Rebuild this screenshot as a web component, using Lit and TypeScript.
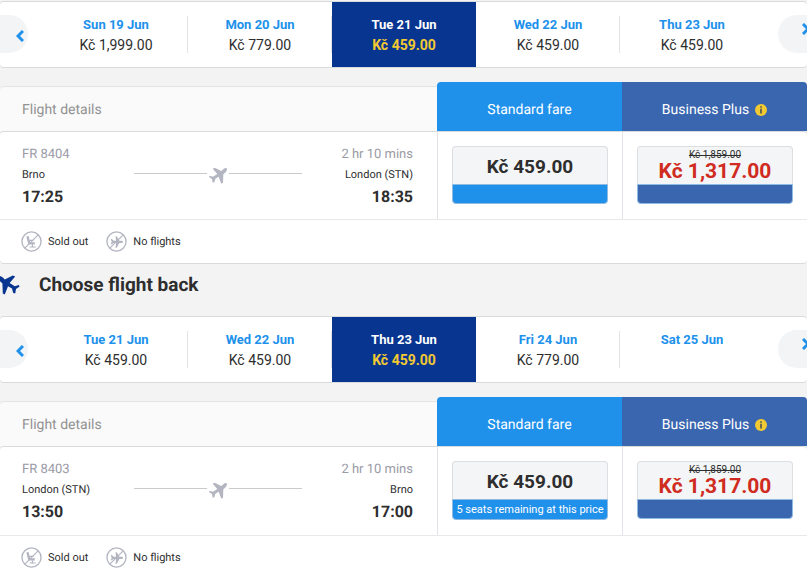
import { LitElement, html, css, svg, nothing } from "lit";
import { customElement, property } from "lit/decorators.js";

interface Day {
  label: string;
  price?: string;
}

interface Flight {
  number: string;
  duration: string;
  from: string;
  to: string;
  departs: string;
  arrives: string;
  standard: string;
  note?: string;
  oldBusiness: string;
  business: string;
}

const PLANE = svg`<path d="M66 17C62 14 55 20 50 25L30 15L24 18L38 34L25 42L15 39L13 43L22 49L24 60L29 59L32 48L42 42L50 63L55 60L56 35C62 30 69 24 66 17Z"/>`;

const OUTBOUND: Day[] = [
  { label: "Sun 19 Jun", price: "Kč 1,999.00" },
  { label: "Mon 20 Jun", price: "Kč 779.00" },
  { label: "Tue 21 Jun", price: "Kč 459.00" },
  { label: "Wed 22 Jun", price: "Kč 459.00" },
  { label: "Thu 23 Jun", price: "Kč 459.00" },
];

const RETURN: Day[] = [
  { label: "Tue 21 Jun", price: "Kč 459.00" },
  { label: "Wed 22 Jun", price: "Kč 459.00" },
  { label: "Thu 23 Jun", price: "Kč 459.00" },
  { label: "Fri 24 Jun", price: "Kč 779.00" },
  { label: "Sat 25 Jun" },
];

const FLIGHT_OUT: Flight = {
  number: "FR 8404",
  duration: "2 hr 10 mins",
  from: "Brno",
  to: "London (STN)",
  departs: "17:25",
  arrives: "18:35",
  standard: "Kč 459.00",
  oldBusiness: "Kč 1,859.00",
  business: "Kč 1,317.00",
};

const FLIGHT_BACK: Flight = {
  number: "FR 8403",
  duration: "2 hr 10 mins",
  from: "London (STN)",
  to: "Brno",
  departs: "13:50",
  arrives: "17:00",
  standard: "Kč 459.00",
  note: "5 seats remaining at this price",
  oldBusiness: "Kč 1,859.00",
  business: "Kč 1,317.00",
};

@customElement("date-strip")
export class DateStrip extends LitElement {
  @property({ attribute: false }) days: Day[] = [];
  @property({ type: Number }) selected = 2;

  static styles = css`
    :host {
      display: block;
    }
    * {
      box-sizing: border-box;
    }
    .strip {
      position: relative;
      display: grid;
      grid-template-columns: repeat(5, 1fr);
      height: 67px;
      padding: 0 43px 0 44px;
      background: #fff;
      border: solid #d9dadc;
      border-width: 1px 0;
      border-radius: 4px;
    }
    button {
      margin: 0;
      border: 0;
      font: inherit;
      cursor: pointer;
    }
    .day {
      position: relative;
      display: flex;
      flex-direction: column;
      align-items: center;
      padding: 13px 0 0;
      background: none;
      color: #2e2e2e;
    }
    .day::after {
      content: "";
      position: absolute;
      right: 0;
      top: 14px;
      width: 1px;
      height: 37px;
      background: #e2e3e5;
    }
    .day.selected::after,
    .day:nth-of-type(5)::after {
      display: none;
    }
    .label {
      font-size: 13px;
      line-height: 20px;
      font-weight: 700;
      color: #2091eb;
    }
    .price {
      font-size: 14px;
      line-height: 20px;
    }
    .day.selected {
      background: #073590;
    }
    .selected .label {
      color: #fff;
    }
    .selected .price {
      color: #f1c933;
      font-weight: 700;
    }
    .arrow {
      position: absolute;
      top: 13px;
      height: 38px;
      background: #f3f4f6;
      display: flex;
    }
    .arrow svg {
      flex: none;
      width: 8px;
      height: 12px;
      fill: none;
      stroke: #2091eb;
      stroke-width: 3;
    }
    .prev {
      left: 0;
      width: 28px;
      padding: 15px 0 0 16px;
      border-radius: 0 19px 19px 0;
    }
    .next {
      right: 0;
      width: 29px;
      padding: 8px 0 0 24px;
      border-radius: 19px 0 0 19px;
      overflow: hidden;
    }
  `;

  render() {
    return html`<div class="strip">
      ${this.days.map(
        (d, i) => html`<button class="day ${i === this.selected ? "selected" : ""}">
          <span class="label">${d.label}</span>
          ${d.price ? html`<span class="price">${d.price}</span>` : nothing}
        </button>`
      )}
      <button class="arrow prev" aria-label="Previous days">
        <svg viewBox="0 0 8 12"><path d="M7 1 2 6l5 5" /></svg>
      </button>
      <button class="arrow next" aria-label="Next days">
        <svg viewBox="0 0 8 12"><path d="m1 1 5 5-5 5" /></svg>
      </button>
    </div>`;
  }
}

@customElement("flight-card")
export class FlightCard extends LitElement {
  @property({ attribute: false }) flight!: Flight;

  static styles = css`
    :host {
      display: block;
    }
    * {
      box-sizing: border-box;
    }
    .head,
    .row {
      display: grid;
      grid-template-columns: 437fr 185fr 185fr;
    }
    .head {
      align-items: end;
      font-size: 14px;
      line-height: 20px;
    }
    .details {
      height: 45px;
      padding: 13px 22px 0;
      background: #fafafa;
      border-top: 1px solid #e3e4e6;
      border-top-left-radius: 4px;
      color: #929292;
    }
    .fare {
      height: 49px;
      display: flex;
      align-items: center;
      justify-content: center;
      gap: 6px;
      padding-top: 7px;
      color: #fff;
    }
    .standard {
      background: #2091eb;
      border-top-left-radius: 4px;
    }
    .business {
      background: #3a66b0;
      border-top-right-radius: 4px;
    }
    .info {
      width: 12px;
      height: 12px;
    }
    .body {
      background: #fff;
      border: solid #d9dadc;
      border-width: 1px 0;
      border-radius: 4px;
    }
    .row {
      border-bottom: 1px solid #e8e8ea;
    }
    .journey {
      display: grid;
      grid-template-columns: 1fr auto 1fr;
      align-items: start;
      padding: 13px 24px 8px 22px;
      color: #2e2e2e;
    }
    .stop {
      display: flex;
      flex-direction: column;
    }
    .arrive {
      align-items: end;
    }
    .meta {
      font-size: 13px;
      line-height: 20px;
      color: #9a9aa6;
    }
    .place {
      font-size: 11px;
      line-height: 20px;
    }
    .time {
      font-size: 16px;
      line-height: 24px;
      font-weight: 700;
    }
    .path {
      display: flex;
      align-items: start;
      gap: 2px;
      width: 168px;
      padding-top: 21px;
    }
    .line {
      flex: 1;
      height: 1px;
      margin-top: 7px;
      background: #c8cacc;
    }
    .plane {
      width: 18px;
      height: 18px;
      margin-top: 1px;
      fill: #b3b5c1;
    }
    .cell {
      border-left: 1px solid #e2e3e8;
      padding: 14px 14px 15px;
    }
    .buy {
      display: block;
      width: 100%;
      margin: 0;
      padding: 0;
      border: 0;
      background: none;
      font: inherit;
      cursor: pointer;
    }
    .amount {
      display: flex;
      flex-direction: column;
      justify-content: center;
      height: 38px;
      padding-top: 3px;
      background: #f4f5f7;
      border: 1px solid #dcdee1;
      border-bottom: 0;
      border-radius: 4px 4px 0 0;
      font-weight: 700;
      font-size: 19px;
      line-height: 22px;
      color: #2e2e2e;
    }
    .plus .amount {
      padding-top: 1px;
    }
    .old {
      font-size: 10px;
      line-height: 10px;
      font-weight: 400;
      text-decoration: line-through;
    }
    .new {
      font-size: 21px;
      line-height: 22px;
      color: #d02b20;
    }
    .note {
      display: block;
      min-height: 20px;
      background: #2091eb;
      border: 1px solid #8fbbe3;
      border-radius: 0 0 4px 4px;
      color: #fff;
      font-size: 11px;
      line-height: 19px;
      white-space: nowrap;
    }
    .plus .note {
      background: #3a66b0;
    }
    .legend {
      display: flex;
      gap: 18px;
      height: 43px;
      padding: 0 21px;
      align-items: center;
      font-size: 11px;
      line-height: 16px;
      color: #2e2e2e;
    }
    .key {
      display: flex;
      align-items: center;
      gap: 6px;
    }
    .badge {
      width: 21px;
      height: 21px;
      fill: #b3b5c1;
      stroke: #b3b5c1;
    }
  `;

  render() {
    const f = this.flight;
    return html`
      <div class="head">
        <div class="details">Flight details</div>
        <div class="fare standard">Standard fare</div>
        <div class="fare business">
          Business Plus
          <svg class="info" viewBox="0 0 12 12">
            <circle cx="6" cy="6" r="6" fill="#f1c933" />
            <path d="M5 2.200h2v1.600H5zM5 4.800h2v4.600H5z" fill="#6b6a4c" />
          </svg>
        </div>
      </div>
      <div class="body">
        <div class="row">
          <div class="journey">
            <div class="stop">
              <span class="meta">${f.number}</span>
              <span class="place">${f.from}</span>
              <span class="time">${f.departs}</span>
            </div>
            <div class="path">
              <span class="line"></span>
              <svg class="plane" viewBox="13 13 54 54">${PLANE}</svg>
              <span class="line"></span>
            </div>
            <div class="stop arrive">
              <span class="meta">${f.duration}</span>
              <span class="place">${f.to}</span>
              <span class="time">${f.arrives}</span>
            </div>
          </div>
          <div class="cell">
            <button class="buy">
              <span class="amount">${f.standard}</span>
              <span class="note">${f.note ?? nothing}</span>
            </button>
          </div>
          <div class="cell plus">
            <button class="buy">
              <span class="amount"><s class="old">${f.oldBusiness}</s><span class="new">${f.business}</span></span>
              <span class="note"></span>
            </button>
          </div>
        </div>
        <div class="legend">
          <span class="key">
            <svg class="badge" viewBox="0 0 22 22">
              <circle cx="11" cy="11" r="10" fill="none" stroke-width="1.400" />
              <path d="M6.800 5.500 8.600 13H14.500" fill="none" stroke-width="2.400" />
              <path d="M8.500 9.800H13M9 16.800H15.500M12 14v2.500" fill="none" stroke-width="1.200" />
              <path d="M4 18 18 4" fill="none" stroke-width="1.200" />
            </svg>
            Sold out
          </span>
          <span class="key">
            <svg class="badge" viewBox="0 0 22 22">
              <circle cx="11" cy="11" r="10" fill="none" stroke-width="1.400" />
              <path d="M5 8.500h1.200L8 10.300h2.500L10 5.500h1.300l2.700 4.800h2.500c2 .4 2 2 0 2.400H14l-2.700 4.800H10l.5-4.800H8L6 14H4.800L6 11.500z" stroke="none" />
              <path d="M4 18 18 4" fill="none" stroke-width="1.200" />
            </svg>
            No flights
          </span>
        </div>
      </div>
    `;
  }
}

@customElement("app-root")
export class AppRoot extends LitElement {
  static styles = css`
    :host {
      display: block;
      box-sizing: border-box;
      height: 100vh;
      padding-top: 1px;
      overflow-x: hidden;
      overflow-y: auto;
      scrollbar-width: none;
      background: #f3f3f3;
      font-family: Roboto, "Liberation Sans", sans-serif;
      text-rendering: geometricPrecision;
    }
    flight-card {
      margin-top: 14px;
    }
    .title {
      display: flex;
      align-items: center;
      gap: 19px;
      height: 52px;
      box-sizing: border-box;
      margin: 0;
      padding-bottom: 10px;
      font-size: 19px;
      line-height: 24px;
      font-weight: 700;
      color: #2e2e2e;
    }
    .back {
      width: 20px;
      height: 20px;
      fill: #073590;
    }
  `;

  render() {
    return html`
      <date-strip .days=${OUTBOUND}></date-strip>
      <flight-card .flight=${FLIGHT_OUT}></flight-card>
      <h2 class="title">
        <svg class="back" viewBox="-62 14 50 50"><g transform="scale(-1 1)">${PLANE}</g></svg>
        Choose flight back
      </h2>
      <date-strip .days=${RETURN}></date-strip>
      <flight-card .flight=${FLIGHT_BACK}></flight-card>
    `;
  }
}
